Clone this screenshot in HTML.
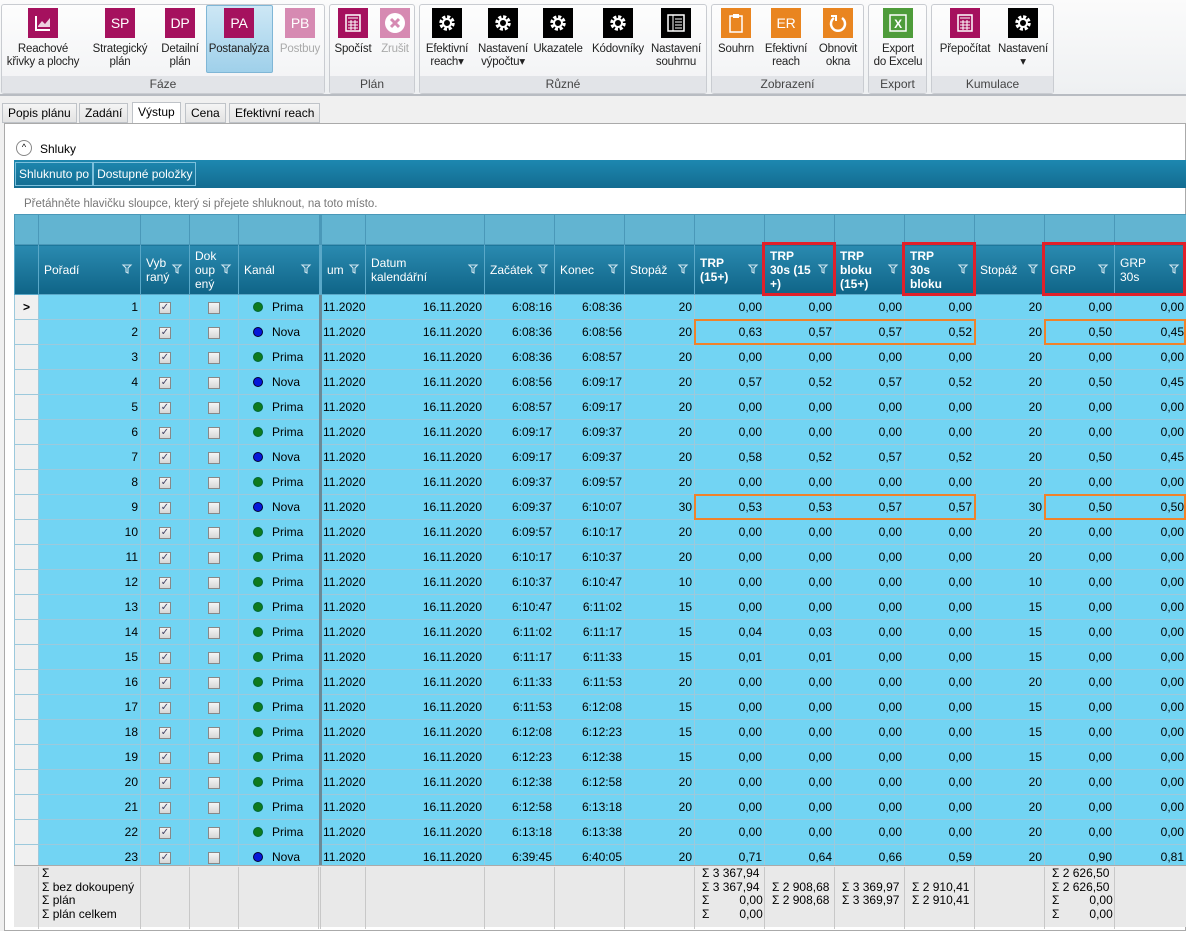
<!DOCTYPE html>
<html><head><meta charset="utf-8"><style>
*{box-sizing:border-box;margin:0;padding:0}
body{width:1186px;height:931px;overflow:hidden;background:#f0f0f0;font-family:"Liberation Sans",sans-serif;font-size:12px;color:#000;position:relative}
.tb{position:absolute;left:0;top:0;width:1186px;height:96px;background:linear-gradient(#fbfbfb,#eef0f2);border-bottom:2px solid #b8bcc2}
.grp{position:absolute;top:4px;height:90px;border:1px solid #c9ccd1;border-radius:3px;background:linear-gradient(#fdfdfd,#f1f2f4)}
.grp .lbl{position:absolute;left:0;right:0;bottom:0;height:17px;background:#e2e4e8;text-align:center;color:#444;font-size:12px;line-height:17px}
.b{position:absolute;top:8px;width:80px;text-align:center;font-size:11.5px;line-height:13px;color:#222;letter-spacing:-0.2px}
.b .ic{width:30px;height:30px;margin:0 auto 5px;color:#fff;font-size:14px;line-height:30px;display:flex;align-items:center;justify-content:center}
.m{background:#a5115e}.kk{background:#000}.o{background:#e98520}.g{background:#4e9c3a}
.sel{position:absolute;left:206px;top:5px;width:67px;height:68px;background:linear-gradient(#cde7f5,#9fd0ea);border:1px solid #7fb6d6;border-radius:2px}
.tab{position:absolute;top:103px;height:20px;border:1px solid #bfc3c8;background:linear-gradient(#f5f5f5,#e3e3e3);padding:2px 5px;font-size:12px}
.frame{position:absolute;left:4px;top:123px;width:1182px;height:808px;background:#fff;border:1px solid #aaa}
table{position:absolute;left:14px;top:214px;border-collapse:collapse;table-layout:fixed;width:1172px}
td{height:25px;border:1px solid #9cc9dc;background:#72d4f3;text-align:right;padding:0 2px;white-space:nowrap;overflow:hidden;font-size:12px}
tr.h1 td{height:30px;background:#62b4d1;border-color:#4a98b8}
tr.h2 td{height:50px;background:linear-gradient(#2a8ab0,#0f6487);color:#fff;text-align:left;padding:0 5px;border-color:#5aa8c8;position:relative;line-height:14px}
td.c{text-align:center}
.cb{display:inline-block;width:12px;height:12px;border:1px solid #888;background:linear-gradient(#f4f4f4,#d6d6d6);vertical-align:middle;font-size:10px;line-height:10px;color:#446;text-align:center}
.dot{display:inline-block;width:10px;height:10px;border-radius:50%;margin-right:9px;vertical-align:-1px}
.P{background:#0f7a1e;border:1px solid #063}.N{background:#0618d8;border:1px solid #003}
td.ch{text-align:left;padding-left:14px}
td.sep{border-left:3px solid #6a8a98;text-align:left;padding-left:1px}
.ob{position:absolute;border:2px solid #f0822a}
.rb{position:absolute;border:3px solid #e0202a}
.foot{position:absolute;left:14px;top:865px;width:1172px;height:62px;background:#e9e9e9;border-top:1px solid #aaa;font-size:12px;line-height:13px}
.foot div{position:absolute;top:1px}
.vl{position:absolute;top:0;height:62px;border-left:1px solid #c8c8c8}
</style></head><body>
<div class="tb">
<div class="grp" style="left:1px;width:324px"><div class="lbl">Fáze</div></div>
<div class="grp" style="left:329px;width:86px"><div class="lbl">Plán</div></div>
<div class="grp" style="left:419px;width:288px"><div class="lbl">Různé</div></div>
<div class="grp" style="left:711px;width:153px"><div class="lbl">Zobrazení</div></div>
<div class="grp" style="left:868px;width:59px"><div class="lbl">Export</div></div>
<div class="grp" style="left:931px;width:123px"><div class="lbl">Kumulace</div></div>
<div class="sel"></div>
<div class="b" style="left:3px"><div class="ic m"><svg width="18" height="18" viewBox="0 0 18 18"><path d="M2 2v14h14" stroke="#fff" stroke-width="2" fill="none"/><path d="M4 12l4-5 3 3 5-6v9H4z" fill="#fff" opacity=".8"/></svg></div>Reachové<br>křivky a plochy</div>
<div class="b" style="left:80px"><div class="ic m">SP</div>Strategický<br>plán</div>
<div class="b" style="left:140px"><div class="ic m">DP</div>Detailní<br>plán</div>
<div class="b" style="left:199px"><div class="ic m">PA</div>Postanalýza</div>
<div class="b" style="left:260px;color:#aaa"><div class="ic m" style="background:#d68ab2">PB</div>Postbuy</div>
<div class="b" style="left:313px"><div class="ic m"><svg width="18" height="18"><rect x="2" y="1" width="14" height="16" fill="none" stroke="#fff" stroke-width="1.5"/><path d="M4 4h10M4 8h10M4 11h10M4 14h10M7 6v10M11 6v10" stroke="#fff"/></svg></div>Spočíst</div>
<div class="b" style="left:355px;color:#aaa"><div class="ic m" style="background:#d68ab2"><svg width="22" height="22"><circle cx="11" cy="11" r="10" fill="#fff"/><path d="M7 7l8 8M15 7l-8 8" stroke="#d68ab2" stroke-width="3"/></svg></div>Zrušit</div>
<div class="b" style="left:407px"><div class="ic kk"><svg width="18" height="18"><circle cx="9" cy="9" r="6" fill="none" stroke="#fff" stroke-width="3.5" stroke-dasharray="3 1.7"/><circle cx="9" cy="9" r="4" fill="none" stroke="#fff" stroke-width="2"/></svg></div>Efektivní<br>reach▾</div>
<div class="b" style="left:463px"><div class="ic kk"><svg width="18" height="18"><circle cx="9" cy="9" r="6" fill="none" stroke="#fff" stroke-width="3.5" stroke-dasharray="3 1.7"/><circle cx="9" cy="9" r="4" fill="none" stroke="#fff" stroke-width="2"/></svg></div>Nastavení<br>výpočtu▾</div>
<div class="b" style="left:518px"><div class="ic kk"><svg width="18" height="18"><circle cx="9" cy="9" r="6" fill="none" stroke="#fff" stroke-width="3.5" stroke-dasharray="3 1.7"/><circle cx="9" cy="9" r="4" fill="none" stroke="#fff" stroke-width="2"/></svg></div>Ukazatele</div>
<div class="b" style="left:578px"><div class="ic kk"><svg width="18" height="18"><circle cx="9" cy="9" r="6" fill="none" stroke="#fff" stroke-width="3.5" stroke-dasharray="3 1.7"/><circle cx="9" cy="9" r="4" fill="none" stroke="#fff" stroke-width="2"/></svg></div>Kódovníky</div>
<div class="b" style="left:636px"><div class="ic kk"><svg width="20" height="20"><rect x="2" y="2" width="16" height="16" fill="none" stroke="#fff" stroke-width="1.5"/><path d="M7 2v16M9 6h7M9 9h7M9 12h7M9 15h7" stroke="#fff"/></svg></div>Nastavení<br>souhrnu</div>
<div class="b" style="left:696px"><div class="ic o"><svg width="16" height="20"><rect x="2" y="3" width="12" height="16" fill="none" stroke="#fff" stroke-width="1.5"/><rect x="5" y="1" width="6" height="4" fill="#fff"/></svg></div>Souhrn</div>
<div class="b" style="left:746px"><div class="ic o">ER</div>Efektivní<br>reach</div>
<div class="b" style="left:798px"><div class="ic o"><svg width="20" height="20"><path d="M6 5a7 7 0 1 0 8 0" fill="none" stroke="#fff" stroke-width="2.5"/><path d="M3 3h5v5" fill="none" stroke="#fff" stroke-width="2"/></svg></div>Obnovit<br>okna</div>
<div class="b" style="left:858px"><div class="ic g"><svg width="20" height="20"><rect x="2" y="2" width="16" height="16" fill="none" stroke="#fff" stroke-width="1.5"/><text x="10" y="15" fill="#fff" font-size="12" font-weight="bold" text-anchor="middle" font-family="Liberation Sans">X</text></svg></div>Export<br>do Excelu</div>
<div class="b" style="left:925px"><div class="ic m"><svg width="18" height="18"><rect x="2" y="1" width="14" height="16" fill="none" stroke="#fff" stroke-width="1.5"/><path d="M4 4h10M4 8h10M4 11h10M4 14h10M7 6v10M11 6v10" stroke="#fff"/></svg></div>Přepočítat</div>
<div class="b" style="left:983px"><div class="ic kk"><svg width="18" height="18"><circle cx="9" cy="9" r="6" fill="none" stroke="#fff" stroke-width="3.5" stroke-dasharray="3 1.7"/><circle cx="9" cy="9" r="4" fill="none" stroke="#fff" stroke-width="2"/></svg></div>Nastavení<br>▾</div>
</div>
<div class="tab" style="left:2px">Popis plánu</div>
<div class="tab" style="left:79px">Zadání</div>
<div class="tab" style="left:132px;background:#fff;height:22px;top:102px">Výstup</div>
<div class="tab" style="left:185px">Cena</div>
<div class="tab" style="left:229px">Efektivní reach</div>
<div class="frame"></div>
<div style="position:absolute;left:16px;top:140px;width:16px;height:16px;border:1px solid #888;border-radius:50%;font-size:9px;text-align:center;line-height:13px">^</div>
<div style="position:absolute;left:40px;top:142px">Shluky</div>
<div style="position:absolute;left:14px;top:160px;width:1172px;height:28px;background:linear-gradient(#1d88b0,#136c90);color:#fff;line-height:28px">
<span style="display:inline-block;border:1px solid #7cc0dc;padding:0 3px;line-height:22px;margin-left:1px">Shluknuto po</span><span style="display:inline-block;border:1px solid #7cc0dc;padding:0 3px;line-height:22px">Dostupné položky</span></div>
<div style="position:absolute;left:24px;top:198px;color:#777;font-size:11.5px">Přetáhněte hlavičku sloupce, který si přejete shluknout, na toto místo.</div>
<table>
<colgroup><col style="width:24px"><col style="width:102px"><col style="width:49px"><col style="width:49px"><col style="width:82px"><col style="width:45px"><col style="width:119px"><col style="width:70px"><col style="width:70px"><col style="width:70px"><col style="width:70px"><col style="width:70px"><col style="width:70px"><col style="width:70px"><col style="width:70px"><col style="width:70px"><col style="width:72px"></colgroup>
<tr class="h1"><td></td><td></td><td></td><td></td><td></td><td class="sep"></td><td></td><td></td><td></td><td></td><td></td><td></td><td></td><td></td><td></td><td></td><td></td></tr>
<tr class="h2"><td></td><td>Pořadí</td><td>Vyb<br>raný</td><td>Dok<br>oup<br>ený</td><td>Kanál</td><td class="sep">um</td><td>Datum<br>kalendářní</td><td>Začátek</td><td>Konec</td><td>Stopáž</td><td><b>TRP<br>(15+)</b></td><td><b>TRP<br>30s (15<br>+)</b></td><td><b>TRP<br>bloku<br>(15+)</b></td><td><b>TRP<br>30s<br>bloku</b></td><td>Stopáž</td><td>GRP</td><td>GRP<br>30s</td></tr>
<tr><td class="c" style="background:#f0f0f0;font-weight:bold">&gt;</td><td>1</td><td class="c"><span class="cb">✓</span></td><td class="c"><span class="cb"></span></td><td class="ch"><span class="dot P"></span>Prima</td><td class="sep">11.2020</td><td>16.11.2020</td><td>6:08:16</td><td>6:08:36</td><td>20</td><td>0,00</td><td>0,00</td><td>0,00</td><td>0,00</td><td>20</td><td>0,00</td><td>0,00</td></tr>
<tr><td style="background:#f0f0f0"></td><td>2</td><td class="c"><span class="cb">✓</span></td><td class="c"><span class="cb"></span></td><td class="ch"><span class="dot N"></span>Nova</td><td class="sep">11.2020</td><td>16.11.2020</td><td>6:08:36</td><td>6:08:56</td><td>20</td><td>0,63</td><td>0,57</td><td>0,57</td><td>0,52</td><td>20</td><td>0,50</td><td>0,45</td></tr>
<tr><td style="background:#f0f0f0"></td><td>3</td><td class="c"><span class="cb">✓</span></td><td class="c"><span class="cb"></span></td><td class="ch"><span class="dot P"></span>Prima</td><td class="sep">11.2020</td><td>16.11.2020</td><td>6:08:36</td><td>6:08:57</td><td>20</td><td>0,00</td><td>0,00</td><td>0,00</td><td>0,00</td><td>20</td><td>0,00</td><td>0,00</td></tr>
<tr><td style="background:#f0f0f0"></td><td>4</td><td class="c"><span class="cb">✓</span></td><td class="c"><span class="cb"></span></td><td class="ch"><span class="dot N"></span>Nova</td><td class="sep">11.2020</td><td>16.11.2020</td><td>6:08:56</td><td>6:09:17</td><td>20</td><td>0,57</td><td>0,52</td><td>0,57</td><td>0,52</td><td>20</td><td>0,50</td><td>0,45</td></tr>
<tr><td style="background:#f0f0f0"></td><td>5</td><td class="c"><span class="cb">✓</span></td><td class="c"><span class="cb"></span></td><td class="ch"><span class="dot P"></span>Prima</td><td class="sep">11.2020</td><td>16.11.2020</td><td>6:08:57</td><td>6:09:17</td><td>20</td><td>0,00</td><td>0,00</td><td>0,00</td><td>0,00</td><td>20</td><td>0,00</td><td>0,00</td></tr>
<tr><td style="background:#f0f0f0"></td><td>6</td><td class="c"><span class="cb">✓</span></td><td class="c"><span class="cb"></span></td><td class="ch"><span class="dot P"></span>Prima</td><td class="sep">11.2020</td><td>16.11.2020</td><td>6:09:17</td><td>6:09:37</td><td>20</td><td>0,00</td><td>0,00</td><td>0,00</td><td>0,00</td><td>20</td><td>0,00</td><td>0,00</td></tr>
<tr><td style="background:#f0f0f0"></td><td>7</td><td class="c"><span class="cb">✓</span></td><td class="c"><span class="cb"></span></td><td class="ch"><span class="dot N"></span>Nova</td><td class="sep">11.2020</td><td>16.11.2020</td><td>6:09:17</td><td>6:09:37</td><td>20</td><td>0,58</td><td>0,52</td><td>0,57</td><td>0,52</td><td>20</td><td>0,50</td><td>0,45</td></tr>
<tr><td style="background:#f0f0f0"></td><td>8</td><td class="c"><span class="cb">✓</span></td><td class="c"><span class="cb"></span></td><td class="ch"><span class="dot P"></span>Prima</td><td class="sep">11.2020</td><td>16.11.2020</td><td>6:09:37</td><td>6:09:57</td><td>20</td><td>0,00</td><td>0,00</td><td>0,00</td><td>0,00</td><td>20</td><td>0,00</td><td>0,00</td></tr>
<tr><td style="background:#f0f0f0"></td><td>9</td><td class="c"><span class="cb">✓</span></td><td class="c"><span class="cb"></span></td><td class="ch"><span class="dot N"></span>Nova</td><td class="sep">11.2020</td><td>16.11.2020</td><td>6:09:37</td><td>6:10:07</td><td>30</td><td>0,53</td><td>0,53</td><td>0,57</td><td>0,57</td><td>30</td><td>0,50</td><td>0,50</td></tr>
<tr><td style="background:#f0f0f0"></td><td>10</td><td class="c"><span class="cb">✓</span></td><td class="c"><span class="cb"></span></td><td class="ch"><span class="dot P"></span>Prima</td><td class="sep">11.2020</td><td>16.11.2020</td><td>6:09:57</td><td>6:10:17</td><td>20</td><td>0,00</td><td>0,00</td><td>0,00</td><td>0,00</td><td>20</td><td>0,00</td><td>0,00</td></tr>
<tr><td style="background:#f0f0f0"></td><td>11</td><td class="c"><span class="cb">✓</span></td><td class="c"><span class="cb"></span></td><td class="ch"><span class="dot P"></span>Prima</td><td class="sep">11.2020</td><td>16.11.2020</td><td>6:10:17</td><td>6:10:37</td><td>20</td><td>0,00</td><td>0,00</td><td>0,00</td><td>0,00</td><td>20</td><td>0,00</td><td>0,00</td></tr>
<tr><td style="background:#f0f0f0"></td><td>12</td><td class="c"><span class="cb">✓</span></td><td class="c"><span class="cb"></span></td><td class="ch"><span class="dot P"></span>Prima</td><td class="sep">11.2020</td><td>16.11.2020</td><td>6:10:37</td><td>6:10:47</td><td>10</td><td>0,00</td><td>0,00</td><td>0,00</td><td>0,00</td><td>10</td><td>0,00</td><td>0,00</td></tr>
<tr><td style="background:#f0f0f0"></td><td>13</td><td class="c"><span class="cb">✓</span></td><td class="c"><span class="cb"></span></td><td class="ch"><span class="dot P"></span>Prima</td><td class="sep">11.2020</td><td>16.11.2020</td><td>6:10:47</td><td>6:11:02</td><td>15</td><td>0,00</td><td>0,00</td><td>0,00</td><td>0,00</td><td>15</td><td>0,00</td><td>0,00</td></tr>
<tr><td style="background:#f0f0f0"></td><td>14</td><td class="c"><span class="cb">✓</span></td><td class="c"><span class="cb"></span></td><td class="ch"><span class="dot P"></span>Prima</td><td class="sep">11.2020</td><td>16.11.2020</td><td>6:11:02</td><td>6:11:17</td><td>15</td><td>0,04</td><td>0,03</td><td>0,00</td><td>0,00</td><td>15</td><td>0,00</td><td>0,00</td></tr>
<tr><td style="background:#f0f0f0"></td><td>15</td><td class="c"><span class="cb">✓</span></td><td class="c"><span class="cb"></span></td><td class="ch"><span class="dot P"></span>Prima</td><td class="sep">11.2020</td><td>16.11.2020</td><td>6:11:17</td><td>6:11:33</td><td>15</td><td>0,01</td><td>0,01</td><td>0,00</td><td>0,00</td><td>15</td><td>0,00</td><td>0,00</td></tr>
<tr><td style="background:#f0f0f0"></td><td>16</td><td class="c"><span class="cb">✓</span></td><td class="c"><span class="cb"></span></td><td class="ch"><span class="dot P"></span>Prima</td><td class="sep">11.2020</td><td>16.11.2020</td><td>6:11:33</td><td>6:11:53</td><td>20</td><td>0,00</td><td>0,00</td><td>0,00</td><td>0,00</td><td>20</td><td>0,00</td><td>0,00</td></tr>
<tr><td style="background:#f0f0f0"></td><td>17</td><td class="c"><span class="cb">✓</span></td><td class="c"><span class="cb"></span></td><td class="ch"><span class="dot P"></span>Prima</td><td class="sep">11.2020</td><td>16.11.2020</td><td>6:11:53</td><td>6:12:08</td><td>15</td><td>0,00</td><td>0,00</td><td>0,00</td><td>0,00</td><td>15</td><td>0,00</td><td>0,00</td></tr>
<tr><td style="background:#f0f0f0"></td><td>18</td><td class="c"><span class="cb">✓</span></td><td class="c"><span class="cb"></span></td><td class="ch"><span class="dot P"></span>Prima</td><td class="sep">11.2020</td><td>16.11.2020</td><td>6:12:08</td><td>6:12:23</td><td>15</td><td>0,00</td><td>0,00</td><td>0,00</td><td>0,00</td><td>15</td><td>0,00</td><td>0,00</td></tr>
<tr><td style="background:#f0f0f0"></td><td>19</td><td class="c"><span class="cb">✓</span></td><td class="c"><span class="cb"></span></td><td class="ch"><span class="dot P"></span>Prima</td><td class="sep">11.2020</td><td>16.11.2020</td><td>6:12:23</td><td>6:12:38</td><td>15</td><td>0,00</td><td>0,00</td><td>0,00</td><td>0,00</td><td>15</td><td>0,00</td><td>0,00</td></tr>
<tr><td style="background:#f0f0f0"></td><td>20</td><td class="c"><span class="cb">✓</span></td><td class="c"><span class="cb"></span></td><td class="ch"><span class="dot P"></span>Prima</td><td class="sep">11.2020</td><td>16.11.2020</td><td>6:12:38</td><td>6:12:58</td><td>20</td><td>0,00</td><td>0,00</td><td>0,00</td><td>0,00</td><td>20</td><td>0,00</td><td>0,00</td></tr>
<tr><td style="background:#f0f0f0"></td><td>21</td><td class="c"><span class="cb">✓</span></td><td class="c"><span class="cb"></span></td><td class="ch"><span class="dot P"></span>Prima</td><td class="sep">11.2020</td><td>16.11.2020</td><td>6:12:58</td><td>6:13:18</td><td>20</td><td>0,00</td><td>0,00</td><td>0,00</td><td>0,00</td><td>20</td><td>0,00</td><td>0,00</td></tr>
<tr><td style="background:#f0f0f0"></td><td>22</td><td class="c"><span class="cb">✓</span></td><td class="c"><span class="cb"></span></td><td class="ch"><span class="dot P"></span>Prima</td><td class="sep">11.2020</td><td>16.11.2020</td><td>6:13:18</td><td>6:13:38</td><td>20</td><td>0,00</td><td>0,00</td><td>0,00</td><td>0,00</td><td>20</td><td>0,00</td><td>0,00</td></tr>
<tr><td style="background:#f0f0f0"></td><td>23</td><td class="c"><span class="cb">✓</span></td><td class="c"><span class="cb"></span></td><td class="ch"><span class="dot N"></span>Nova</td><td class="sep">11.2020</td><td>16.11.2020</td><td>6:39:45</td><td>6:40:05</td><td>20</td><td>0,71</td><td>0,64</td><td>0,66</td><td>0,59</td><td>20</td><td>0,90</td><td>0,81</td></tr>
</table>
<svg style="position:absolute;left:0;top:0;pointer-events:none" width="1186" height="300">
<defs><path id="fu" d="M0 0h8l-3 3v5l-2-1V3z"/></defs>
<g fill="none" stroke="#cfe6f0" stroke-width="1.1">
<use href="#fu" x="123" y="265"/><use href="#fu" x="173" y="265"/><use href="#fu" x="222" y="265"/><use href="#fu" x="302" y="265"/><use href="#fu" x="350" y="265"/><use href="#fu" x="469" y="265"/><use href="#fu" x="539" y="265"/><use href="#fu" x="609" y="265"/><use href="#fu" x="679" y="265"/><use href="#fu" x="749" y="265"/><use href="#fu" x="819" y="265"/><use href="#fu" x="889" y="265"/><use href="#fu" x="959" y="265"/><use href="#fu" x="1029" y="265"/><use href="#fu" x="1099" y="265"/><use href="#fu" x="1170" y="265"/>
</g></svg>
<div class="rb" style="left:762px;top:242px;width:74px;height:54px"></div>
<div class="rb" style="left:902px;top:242px;width:74px;height:54px"></div>
<div class="rb" style="left:1042px;top:242px;width:144px;height:54px"></div>
<div class="ob" style="left:694px;top:319px;width:282px;height:26px"></div>
<div class="ob" style="left:1044px;top:319px;width:142px;height:26px"></div>
<div class="ob" style="left:694px;top:494px;width:282px;height:26px"></div>
<div class="ob" style="left:1044px;top:494px;width:142px;height:26px"></div>
<div class="foot">
<div class="vl" style="left:24px"></div><div class="vl" style="left:126px"></div><div class="vl" style="left:175px"></div><div class="vl" style="left:224px"></div><div class="vl" style="left:304px"></div><div class="vl" style="left:306px"></div><div class="vl" style="left:351px"></div><div class="vl" style="left:470px"></div><div class="vl" style="left:540px"></div><div class="vl" style="left:610px"></div><div class="vl" style="left:680px"></div><div class="vl" style="left:750px"></div><div class="vl" style="left:820px"></div><div class="vl" style="left:890px"></div><div class="vl" style="left:960px"></div><div class="vl" style="left:1030px"></div><div class="vl" style="left:1100px"></div>
<div style="left:28px;line-height:13.5px">Σ<br>Σ bez dokoupený<br>Σ plán<br>Σ plán celkem</div>
<div style="left:688px;line-height:13.5px">Σ 3 367,94<br>Σ 3 367,94<br>Σ&nbsp;&nbsp;&nbsp;&nbsp;&nbsp;&nbsp;&nbsp;&nbsp;&nbsp;0,00<br>Σ&nbsp;&nbsp;&nbsp;&nbsp;&nbsp;&nbsp;&nbsp;&nbsp;&nbsp;0,00</div>
<div style="left:758px;line-height:13.5px"><br>Σ 2 908,68<br>Σ 2 908,68</div>
<div style="left:828px;line-height:13.5px"><br>Σ 3 369,97<br>Σ 3 369,97</div>
<div style="left:898px;line-height:13.5px"><br>Σ 2 910,41<br>Σ 2 910,41</div>
<div style="left:1038px;line-height:13.5px">Σ 2 626,50<br>Σ 2 626,50<br>Σ&nbsp;&nbsp;&nbsp;&nbsp;&nbsp;&nbsp;&nbsp;&nbsp;&nbsp;0,00<br>Σ&nbsp;&nbsp;&nbsp;&nbsp;&nbsp;&nbsp;&nbsp;&nbsp;&nbsp;0,00</div>
</div>
</body></html>
